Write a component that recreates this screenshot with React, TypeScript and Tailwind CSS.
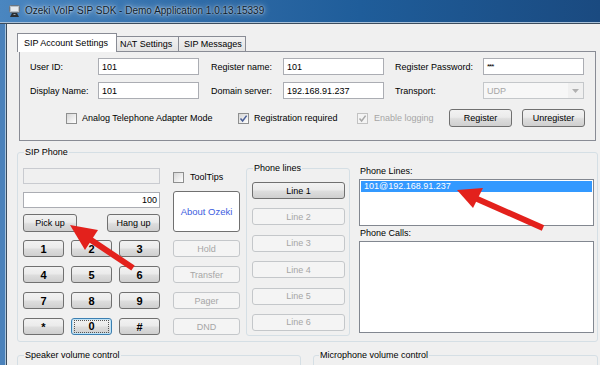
import React from "react";

const btnOn =
  "flex items-center justify-center rounded-[3px] border border-[#707070] bg-[linear-gradient(#f2f2f2,#ebebeb_45%,#dddddd_55%,#cfcfcf)] text-black";
const btnOff =
  "flex items-center justify-center rounded-[3px] border border-[#c4c7ca] bg-[#f4f4f4] text-[#a6a6a6]";
const field = "h-[17px] border border-[#abadb3] bg-white flex items-center px-[3px]";
const group = "border border-[#d5dfe5] rounded-[3px]";

function Check({ checked, disabled }: { checked?: boolean; disabled?: boolean }) {
  return (
    <div
      className={
        "w-[11px] h-[11px] shrink-0 border flex items-center justify-center " +
        (disabled
          ? "border-[#c2c2c2] bg-[#f4f4f4]"
          : "border-[#8e8f8f] bg-[linear-gradient(135deg,#d6d6d6,#ffffff)]")
      }
    >
      {checked && (
        <svg width="9" height="9" viewBox="0 0 9 9">
          <path
            d="M1.5 4.6 L3.6 7 L7.6 1.6"
            fill="none"
            stroke={disabled ? "#a8a8a8" : "#4a5f97"}
            strokeWidth="1.5"
          />
        </svg>
      )}
    </div>
  );
}

function TitleIcon() {
  return (
    <svg width="13" height="13" viewBox="0 0 13 13">
      <rect x="1.5" y="0.5" width="10" height="7" rx="1" fill="#b8c0c8" stroke="#6c7680" />
      <rect x="3" y="2" width="7" height="4" fill="#e6eaee" />
      <path d="M4 8 L9 8 L11 12 L2 12 Z" fill="#2b2f33" />
      <rect x="5.5" y="9" width="2" height="1" fill="#9aa3ab" />
    </svg>
  );
}

export default function App() {
  const keys = ["1", "2", "3", "4", "5", "6", "7", "8", "9", "*", "0", "#"];

  return (
    <div className="relative w-[600px] h-[365px] overflow-hidden bg-[#f0f0f0] font-['Liberation_Sans',Arial,sans-serif] text-[9px] leading-[12px] text-black">
      {/* title bar */}
      <div className="h-[22px] flex items-center pl-[8px] gap-[4px] bg-[linear-gradient(90deg,#4a86c0,#2e6aa6_35%,#1f5d9a_60%,#1a4a80)]">
        <TitleIcon />
        <span className="text-[10px] text-[#0b1a2a] [text-shadow:0_0_6px_rgba(255,255,255,0.9),0_0_2px_rgba(255,255,255,0.8)]">
          Ozeki VoIP SIP SDK - Demo Application 1.0.13.15339
        </span>
      </div>
      <div className="h-[1px] bg-[#a9c1d9]" />
      <div className="h-[1px] bg-[#3c4c5c]" />

      <div className="flex">
        <div className="w-[5px] h-[343px] bg-[#4b82bb]" />
        <div className="w-[1px] h-[343px] bg-[#a8c4de]" />
        <div className="w-[1px] h-[343px] bg-[#3a4c5e]" />

        <div className="flex-1">
          {/* tab control */}
          <div className="ml-[10px] mt-[9px]">
            <div className="flex items-end h-[18px]">
              <div className="relative z-10 w-[100px] h-[19px] -mb-px border border-b-0 border-[#898c95] bg-white pl-[6px] pt-[3px]">
                SIP Account Settings
              </div>
              <div className="w-[62px] h-[15px] border border-b-0 border-l-0 border-[#898c95] bg-[linear-gradient(#f2f2f2,#e3e3e3)] pl-[3px] pt-[1px]">
                NAT Settings
              </div>
              <div className="w-[67px] h-[15px] border border-b-0 border-l-0 border-[#898c95] bg-[linear-gradient(#f2f2f2,#e3e3e3)] pl-[5px] pt-[1px]">
                SIP Messages
              </div>
            </div>
            <div className="ml-[2px] w-[577px] h-[90px] border border-[#898c95] bg-[#f0f0f0]">
              <div className="mt-[6px] pl-[10px] flex items-center h-[17px]">
                <span className="w-[68px]">User ID:</span>
                <div className={field + " w-[101px]"}>101</div>
                <span className="w-[12px]" />
                <span className="w-[72px]">Register name:</span>
                <div className={field + " w-[101px]"}>101</div>
                <span className="w-[11px]" />
                <span className="w-[88px]">Register Password:</span>
                <div className={field + " w-[101px]"}>
                  <span className="text-[8px] tracking-[-1px]">***</span>
                </div>
              </div>
              <div className="mt-[7px] pl-[10px] flex items-center h-[17px]">
                <span className="w-[68px]">Display Name:</span>
                <div className={field + " w-[101px]"}>101</div>
                <span className="w-[12px]" />
                <span className="w-[72px]">Domain server:</span>
                <div className={field + " w-[101px]"}>192.168.91.237</div>
                <span className="w-[11px]" />
                <span className="w-[88px]">Transport:</span>
                <div className="w-[101px] h-[17px] border border-[#c4c7ca] bg-[#f7f7f7] flex items-center">
                  <span className="flex-1 pl-[3px] text-[#a6a6a6]">UDP</span>
                  <div className="w-[15px] h-full flex items-center justify-center bg-[#f0f0f0]">
                    <svg width="7" height="4" viewBox="0 0 7 4">
                      <path d="M0 0 L7 0 L3.5 4 Z" fill="#b0b0b0" />
                    </svg>
                  </div>
                </div>
              </div>
              <div className="mt-[10px] pl-[46px] flex items-center h-[18px]">
                <div className="w-[172px] flex items-center gap-[5px]">
                  <Check />
                  <span>Analog Telephone Adapter Mode</span>
                </div>
                <div className="w-[119px] flex items-center gap-[5px]">
                  <Check checked />
                  <span>Registration required</span>
                </div>
                <div className="w-[92px] flex items-center gap-[6px]">
                  <Check checked disabled />
                  <span className="text-[#a6a6a6]">Enable logging</span>
                </div>
                <div className={btnOn + " w-[63px] h-[18px]"}>Register</div>
                <span className="w-[10px]" />
                <div className={btnOn + " w-[63px] h-[18px]"}>Unregister</div>
              </div>
            </div>
          </div>

          {/* SIP Phone */}
          <fieldset className={group + " ml-[10px] mt-[5px] w-[581px] h-[196px]"}>
            <legend className="ml-[6px] px-[1px] leading-[12px]">SIP Phone</legend>
            <div className="flex pl-[5px]">
              {/* dial column */}
              <div className="w-[137px] mt-[10px] flex flex-col">
                <div className="h-[16px] border border-[#c9cbd0] bg-[#f0f0f0]" />
                <div className="mt-[8px] h-[16px] border border-[#abadb3] bg-white flex items-center justify-end pr-[2px]">
                  100
                </div>
                <div className="mt-[6px] flex justify-between">
                  <div className={btnOn + " w-[54px] h-[18px]"}>Pick up</div>
                  <div className={btnOn + " w-[53px] h-[18px]"}>Hang up</div>
                </div>
                <div className="mt-[8px] grid grid-cols-3 gap-x-[7px] gap-y-[9px]">
                  {keys.map((k) =>
                    k === "0" ? (
                      <div
                        key={k}
                        className="h-[17px] flex items-center justify-center rounded-[3px] border border-[#3c7fb1] bg-[linear-gradient(#f2f2f2,#ebebeb_45%,#dddddd_55%,#cfcfcf)] shadow-[inset_0_0_0_1px_#bfe3f7] text-[11px] font-bold"
                      >
                        <span className="border border-dotted border-[#555] px-[13px] leading-[11px]">0</span>
                      </div>
                    ) : (
                      <div key={k} className={btnOn + " h-[17px] text-[11px] font-bold"}>
                        {k}
                      </div>
                    )
                  )}
                </div>
              </div>

              {/* actions column */}
              <div className="ml-[13px] w-[67px] flex flex-col">
                <div className="mt-[13px] h-[12px] flex items-center gap-[6px]">
                  <Check />
                  <span>ToolTips</span>
                </div>
                <div className="mt-[8px] h-[41px] rounded-[3px] border border-[#707070] bg-white flex items-center justify-center text-[#3d5de0] text-[9.5px]">
                  About Ozeki
                </div>
                <div className="mt-[8px] flex flex-col gap-[9px]">
                  {["Hold", "Transfer", "Pager", "DND"].map((b) => (
                    <div key={b} className={btnOff + " h-[17px]"}>
                      {b}
                    </div>
                  ))}
                </div>
              </div>

              {/* phone lines */}
              <fieldset className={group + " ml-[6px] mt-[4px] w-[104px] h-[174px]"}>
                <legend className="ml-[6px] px-[1px] leading-[12px]">Phone lines</legend>
                <div className="mt-[8px] pl-[5px] flex flex-col gap-[9.4px]">
                  <div className={btnOn + " w-[93px] h-[17px]"}>Line 1</div>
                  {["Line 2", "Line 3", "Line 4", "Line 5", "Line 6"].map((l) => (
                    <div key={l} className={btnOff + " w-[93px] h-[17px]"}>
                      {l}
                    </div>
                  ))}
                </div>
              </fieldset>

              {/* lists */}
              <div className="ml-[9px] w-[235px] flex flex-col">
                <span className="mt-[7px] pl-[1px]">Phone Lines:</span>
                <div className="mt-[2px] h-[47px] border border-[#828790] bg-white p-[1px]">
                  <div className="h-[11px] bg-[#3399ff] text-white pl-[3px] leading-[11px]">
                    101@192.168.91.237
                  </div>
                </div>
                <span className="mt-[1px] pl-[1px]">Phone Calls:</span>
                <div className="mt-[2px] h-[92px] border border-[#828790] bg-white" />
              </div>
            </div>
          </fieldset>

          {/* volume groups */}
          <div className="ml-[10px] mt-[7px] flex gap-[12px]">
            <fieldset className={group + " w-[284px] h-[40px]"}>
              <legend className="ml-[6px] px-[1px] leading-[12px]">Speaker volume control</legend>
            </fieldset>
            <fieldset className={group + " w-[285px] h-[40px]"}>
              <legend className="ml-[5px] px-[1px] leading-[12px]">Microphone volume control</legend>
            </fieldset>
          </div>
        </div>
      </div>

      {/* red callout arrows */}
      <svg className="absolute inset-0 pointer-events-none" width="600" height="365" viewBox="0 0 600 365">
        <line x1="133" y1="268" x2="88" y2="238" stroke="#e3211c" strokeWidth="6" />
        <polygon points="70,225 98,230 85,250" fill="#e3211c" />
        <line x1="543" y1="228" x2="475" y2="198" stroke="#e3211c" strokeWidth="6" />
        <polygon points="457,190 483,188 473,208" fill="#e3211c" />
      </svg>
    </div>
  );
}
